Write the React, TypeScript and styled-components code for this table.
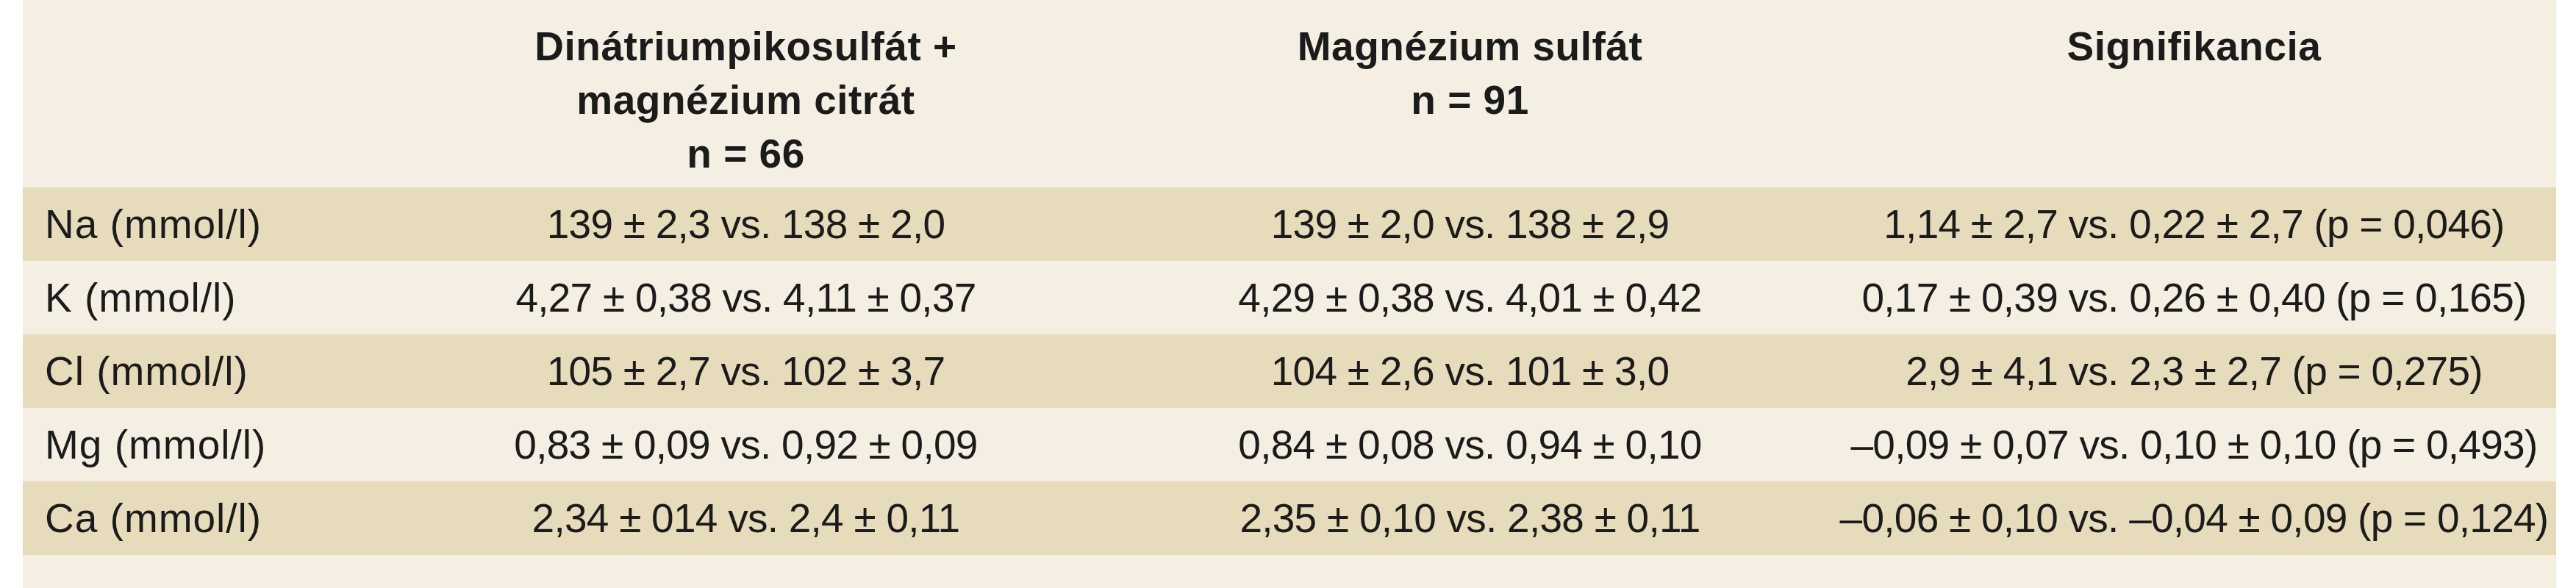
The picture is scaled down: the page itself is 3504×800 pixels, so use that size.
import React from 'react'
import styled, { createGlobalStyle } from 'styled-components';

const GlobalStyle = createGlobalStyle`
  html, body {
    margin: 0;
    padding: 0;
    background: #FFFFFF;
  }
  body {
    font-family: "Liberation Sans", Arial, sans-serif;
    color: #1B1B1B;
  }
`;

const Sheet = styled.div`
  width: 3446px;
  height: 800px;
  margin-left: 31px;
  background-color: #F4EFE2;
`;

const Table = styled.table`
  width: 100%;
  border-collapse: collapse;
  table-layout: fixed;
  font-size: 55px;
`;

const HeadCell = styled.th`
  height: 255px;
  padding: 27px 0 0;
  vertical-align: top;
  text-align: center;
  font-weight: 700;
  line-height: 73px;
  letter-spacing: 0.5px;
  box-sizing: border-box;
`;

const Row = styled.tr<{ $shaded: boolean }>`
  height: 100px;
  background-color: ${p => (p.$shaded ? '#E6DBBA' : 'transparent')};
`;

const LabelCell = styled.td`
  padding: 0 0 0 30px;
  text-align: left;
  vertical-align: middle;
  white-space: nowrap;
  letter-spacing: 1px;
`;

const ValueCell = styled.td`
  padding: 0;
  text-align: center;
  vertical-align: middle;
  white-space: nowrap;
  letter-spacing: -0.75px;
`;

interface IRow {
  label: string;
  first: string;
  second: string;
  diff: string;
}

const rows: IRow[] = [
  { label: 'Na (mmol/l)', first: '139 ± 2,3 vs. 138 ± 2,0', second: '139 ± 2,0 vs. 138 ± 2,9', diff: '1,14 ± 2,7 vs. 0,22 ± 2,7 (p = 0,046)' },
  { label: 'K (mmol/l)', first: '4,27 ± 0,38 vs. 4,11 ± 0,37', second: '4,29 ± 0,38 vs. 4,01 ± 0,42', diff: '0,17 ± 0,39 vs. 0,26 ± 0,40 (p = 0,165)' },
  { label: 'Cl (mmol/l)', first: '105 ± 2,7 vs. 102 ± 3,7', second: '104 ± 2,6 vs. 101 ± 3,0', diff: '2,9 ± 4,1 vs. 2,3 ± 2,7 (p = 0,275)' },
  { label: 'Mg (mmol/l)', first: '0,83 ± 0,09 vs. 0,92 ± 0,09', second: '0,84 ± 0,08 vs. 0,94 ± 0,10', diff: '–0,09 ± 0,07 vs. 0,10 ± 0,10 (p = 0,493)' },
  { label: 'Ca (mmol/l)', first: '2,34 ± 014 vs. 2,4 ± 0,11', second: '2,35 ± 0,10 vs. 2,38 ± 0,11', diff: '–0,06 ± 0,10 vs. –0,04 ± 0,09 (p = 0,124)' },
];

const App: React.FC = () => {
  return (
    <>
      <GlobalStyle />
      <Sheet>
        <Table>
          <colgroup>
            <col style={{ width: 491 }} />
            <col />
            <col />
            <col />
          </colgroup>
          <thead>
            <tr>
              <HeadCell />
              <HeadCell>Dinátriumpikosulfát +<br />magnézium citrát<br />n = 66</HeadCell>
              <HeadCell>Magnézium sulfát<br />n = 91</HeadCell>
              <HeadCell>Signifikancia</HeadCell>
            </tr>
          </thead>
          <tbody>
            {rows.map((r, i) => (
              <Row key={r.label} $shaded={i % 2 === 0}>
                <LabelCell>{r.label}</LabelCell>
                <ValueCell>{r.first}</ValueCell>
                <ValueCell>{r.second}</ValueCell>
                <ValueCell>{r.diff}</ValueCell>
              </Row>
            ))}
          </tbody>
        </Table>
      </Sheet>
    </>
  )
}

export default App
